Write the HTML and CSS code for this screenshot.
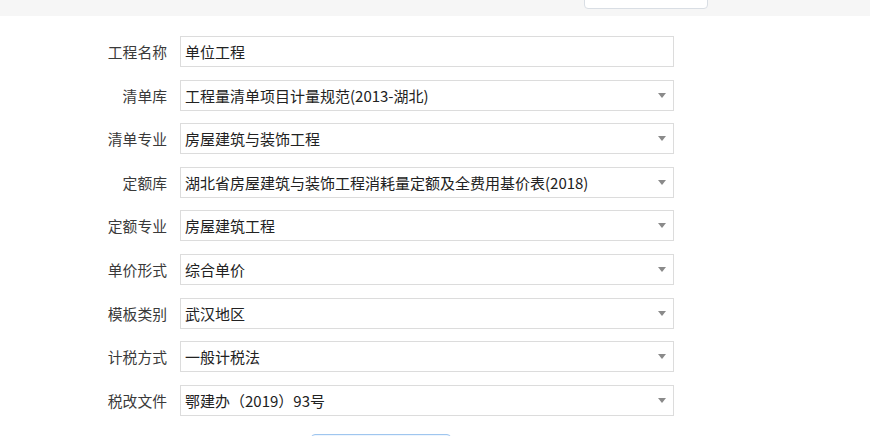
FILE: index.html
```html
<!DOCTYPE html>
<html lang="zh">
<head>
<meta charset="utf-8">
<link rel="stylesheet" href="styles.css">
</head>
<body>
<div class="topbar">
  <div class="top-btn"></div>
</div>
<form class="form">
  <div class="row"><label class="lbl">工程名称</label><div class="field"><span class="val">单位工程</span></div></div>
  <div class="row"><label class="lbl">清单库</label><div class="field select"><span class="val">工程量清单项目计量规范(2013-湖北)</span><span class="arrow"></span></div></div>
  <div class="row"><label class="lbl">清单专业</label><div class="field select"><span class="val">房屋建筑与装饰工程</span><span class="arrow"></span></div></div>
  <div class="row"><label class="lbl">定额库</label><div class="field select"><span class="val">湖北省房屋建筑与装饰工程消耗量定额及全费用基价表(2018)</span><span class="arrow"></span></div></div>
  <div class="row"><label class="lbl">定额专业</label><div class="field select"><span class="val">房屋建筑工程</span><span class="arrow"></span></div></div>
  <div class="row"><label class="lbl">单价形式</label><div class="field select"><span class="val">综合单价</span><span class="arrow"></span></div></div>
  <div class="row"><label class="lbl">模板类别</label><div class="field select"><span class="val">武汉地区</span><span class="arrow"></span></div></div>
  <div class="row"><label class="lbl">计税方式</label><div class="field select"><span class="val">一般计税法</span><span class="arrow"></span></div></div>
  <div class="row"><label class="lbl">税改文件</label><div class="field select"><span class="val">鄂建办（2019）93号</span><span class="arrow"></span></div></div>
  <div class="actions"><div class="btn-primary"></div></div>
</form>
</body>
</html>
```
FILE: styles.css
```css
html, body {
  margin: 0;
  padding: 0;
  background: #ffffff;
  overflow: hidden;
  height: 436px;
}
body {
  font-family: "Noto Sans CJK SC", "Noto Sans", sans-serif;
  color: #333333;
}
.topbar {
  height: 16px;
  background: #f6f6f6;
  display: flex;
  padding-left: 584px;
  box-sizing: border-box;
}
.top-btn {
  width: 124px;
  height: 30px;
  margin-top: -21px;
  background: #ffffff;
  border: 1px solid #d9dee4;
  border-radius: 4px;
  box-sizing: border-box;
}
.form {
  display: flex;
  flex-direction: column;
  gap: 12.6px;
  padding-top: 20px;
  margin: 0;
  height: 420px;
  box-sizing: border-box;
  overflow: hidden;
}
.row {
  display: flex;
  align-items: center;
  height: 31px;
  flex-shrink: 0;
}
.lbl {
  width: 180px;
  padding-right: 13px;
  box-sizing: border-box;
  text-align: right;
  font-size: 14.8px;
  color: #3a3a3a;
}
.field {
  width: 494px;
  height: 31px;
  border: 1px solid #dcdcdc;
  box-sizing: border-box;
  display: flex;
  align-items: center;
  justify-content: space-between;
  padding: 0 7px 0 4px;
  background: #fff;
}
.val {
  font-size: 15px;
  color: #222;
  white-space: nowrap;
}
.arrow {
  width: 0;
  height: 0;
  border-left: 4.5px solid transparent;
  border-right: 4.5px solid transparent;
  border-top: 5px solid #8a8a8a;
}
.actions {
  display: flex;
  padding-left: 311px;
  padding-top: 6px;
  flex-shrink: 0;
}
.btn-primary {
  width: 140px;
  height: 32px;
  border: 1px solid #9fc6ef;
  border-radius: 4px;
  background: #eef5fd;
  box-sizing: border-box;
}
```
